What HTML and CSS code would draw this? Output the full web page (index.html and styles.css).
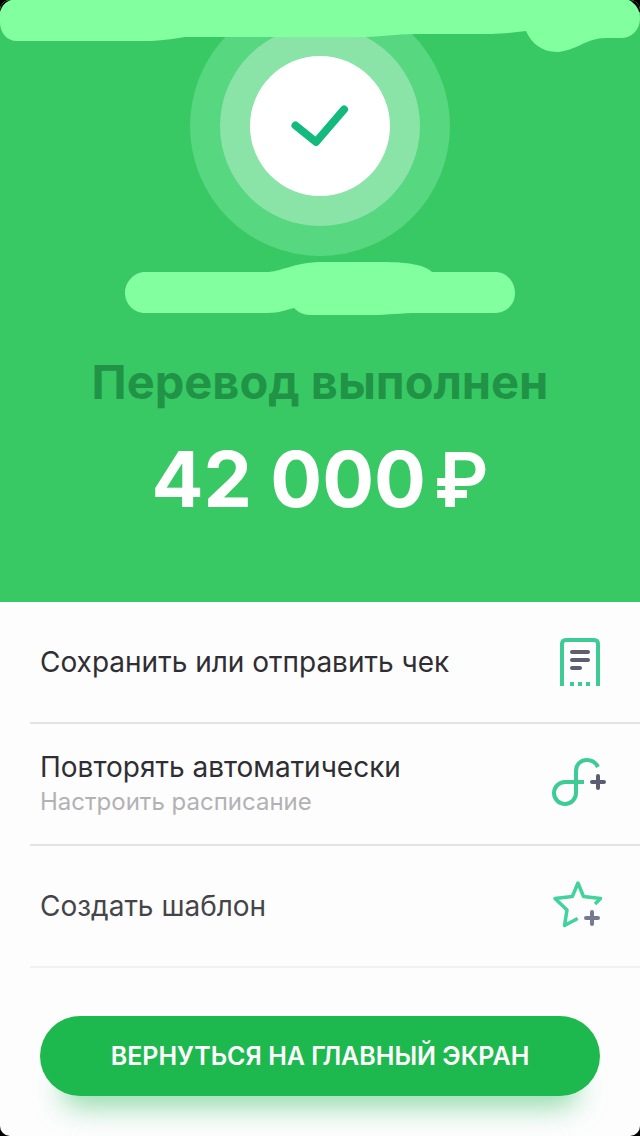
FILE: index.html
```html
<!DOCTYPE html>
<html lang="ru">
<head>
<meta charset="utf-8">
<meta name="viewport" content="width=device-width, initial-scale=1">
<title>Перевод выполнен</title>
<link rel="stylesheet" href="styles.css">
</head>
<body>
<main class="screen">
  <header class="result">
    <svg class="top-stroke" viewBox="0 0 640 52" preserveAspectRatio="none" aria-hidden="true">
      <path d="M11 0H629C636 4 640 10 640 18C640 30 632 38 621 38H606C586 38 576 51 557 52C542 52 531 43 526 31C515 32 505 34 490 34H415C395 34 380 37 365 37H185C172 39 160 41 143 41H17C7 41 0 33 0 22V12C2 6 5 2 11 0Z" fill="#82ff9f"/>
    </svg>
    <svg class="status" viewBox="0 4 260 256" aria-hidden="true">
      <circle cx="130" cy="130" r="130" fill="#57d77f"/>
      <circle cx="130" cy="130" r="100" fill="#8ae4a7"/>
      <circle cx="130" cy="130" r="70" fill="#fff"/>
      <path d="M105.500 129.500L126 146L154 113.500" fill="none" stroke="#12ba7d" stroke-width="8" stroke-linecap="round" stroke-linejoin="round"/>
    </svg>
    <svg class="name-stroke" viewBox="0 0 390 54" aria-hidden="true">
      <path d="M20 10H142C155 10 168 1 194 0H257C283 0 300 3 307 10H370C381 10 390 19 390 31S381 51 370 51H295C275 51 262 53 248 53H185C178 53 173 50 169 46C160 48 155 51 142 51H20C9 51 0 42 0 31S9 10 20 10Z" fill="#82ff9f"/>
    </svg>
    <h1 class="title">Перевод выполнен</h1>
    <p class="amount"><span>42 000</span><span class="currency">₽</span></p>
  </header>

  <ul class="actions">
    <li class="action">
      <button class="action-button" type="button">
        <span class="label">Сохранить или отправить чек</span>
        <svg class="icon" viewBox="0 0 60 60" aria-hidden="true">
          <path d="M12 54V12Q12 8 16 8H44Q48 8 48 12V54" fill="none" stroke="#3dcc96" stroke-width="4"/>
          <path d="M22 20H38M22 28H38M22 36H30" stroke="#5c5d70" stroke-width="4" stroke-linecap="round"/>
          <path d="M20 50H24V54H20ZM28 50H32V54H28ZM36 50H40V54H36Z" fill="#3dcc96"/>
        </svg>
      </button>
    </li>
    <li class="action">
      <button class="action-button" type="button">
        <span class="text">
          <span class="label">Повторять автоматически</span>
          <span class="hint">Настроить расписание</span>
        </span>
        <svg class="icon" viewBox="0 4 60 60" aria-hidden="true">
          <path d="M34 32H15A11 11 0 1 0 26 43V21C26 14 31 10 37 10C42 10 46 13 48 17" fill="none" stroke="#3dcc96" stroke-width="4"/>
          <path d="M42 32H54M48 26V38" stroke="#5c5d70" stroke-width="4" stroke-linecap="round"/>
        </svg>
      </button>
    </li>
    <li class="action action-faded">
      <button class="action-button" type="button">
        <span class="label">Создать шаблон</span>
        <svg class="icon" viewBox="0 4 60 60" aria-hidden="true">
          <path d="M27.700 46.500L14.500 53.500L17 38L5 26.500L22.300 24.500L28 11L33.500 24.500L50.500 26.500L45 32" fill="none" stroke="#40d39c" stroke-width="3.500" stroke-linejoin="round"/>
          <path d="M36 46H48M42 40V52" stroke="#777990" stroke-width="4" stroke-linecap="round"/>
        </svg>
      </button>
    </li>
  </ul>

  <footer class="footer">
    <button class="home-button" type="button">ВЕРНУТЬСЯ НА ГЛАВНЫЙ ЭКРАН</button>
  </footer>
</main>
</body>
</html>
```
FILE: styles.css
```css
* {
  box-sizing: border-box;
}

body {
  margin: 0;
  background: #000;
  font-family: Inter, "Liberation Sans", sans-serif;
}

.screen {
  min-height: 100vh;
  background: #fdfdfe;
  border-radius: 10px;
  overflow: hidden;
}

.result {
  position: relative;
  display: flex;
  flex-direction: column;
  align-items: center;
  min-height: 602px;
  background: linear-gradient(#000, #000) top / 100% 12px no-repeat, #38c965;
}

.top-stroke {
  position: absolute;
  top: 0;
  left: 0;
  width: 100%;
  height: 52px;
}

.status {
  width: 260px;
  height: 256px;
}

.name-stroke {
  width: 390px;
  height: 54px;
  margin-top: 6px;
}

.title {
  margin: 36px 0 0;
  color: #219346;
  font-size: 47px;
  font-weight: 700;
  line-height: 60px;
}

.amount {
  display: flex;
  align-items: baseline;
  gap: 8px;
  margin: 22px 0 0;
  color: #fff;
  font-size: 77px;
  font-weight: 700;
  line-height: 90px;
}

.currency {
  font-size: 75px;
  font-weight: 600;
}

.actions {
  margin: 0;
  padding: 0 0 0 30px;
  list-style: none;
}

.action {
  border-bottom: 2px solid #e3e3e4;
}

.action-button {
  display: flex;
  align-items: center;
  justify-content: space-between;
  width: 100%;
  min-height: 120px;
  padding: 0 30px 0 10px;
  border: 0;
  background: none;
  color: #2f2e33;
  font: inherit;
  text-align: left;
}

.text {
  display: flex;
  flex-direction: column;
}

.label {
  font-size: 28px;
  font-weight: 400;
  line-height: 36px;
}

.hint {
  color: #b2b2b4;
  font-size: 24px;
  line-height: 34px;
}

.icon {
  flex: none;
  width: 60px;
  height: 60px;
}

.action-faded {
  border-color: #f1f1f2;
}

.action-faded .action-button {
  color: #454549;
}

.footer {
  padding: 48px 40px 40px;
}

.home-button {
  display: block;
  width: 100%;
  min-height: 80px;
  border: 0;
  border-radius: 40px;
  background: #1db94f;
  box-shadow: 0 32px 28px -22px #1db94f80;
  color: #fff;
  font-family: inherit;
  font-size: 25px;
  font-weight: 600;
}
```
